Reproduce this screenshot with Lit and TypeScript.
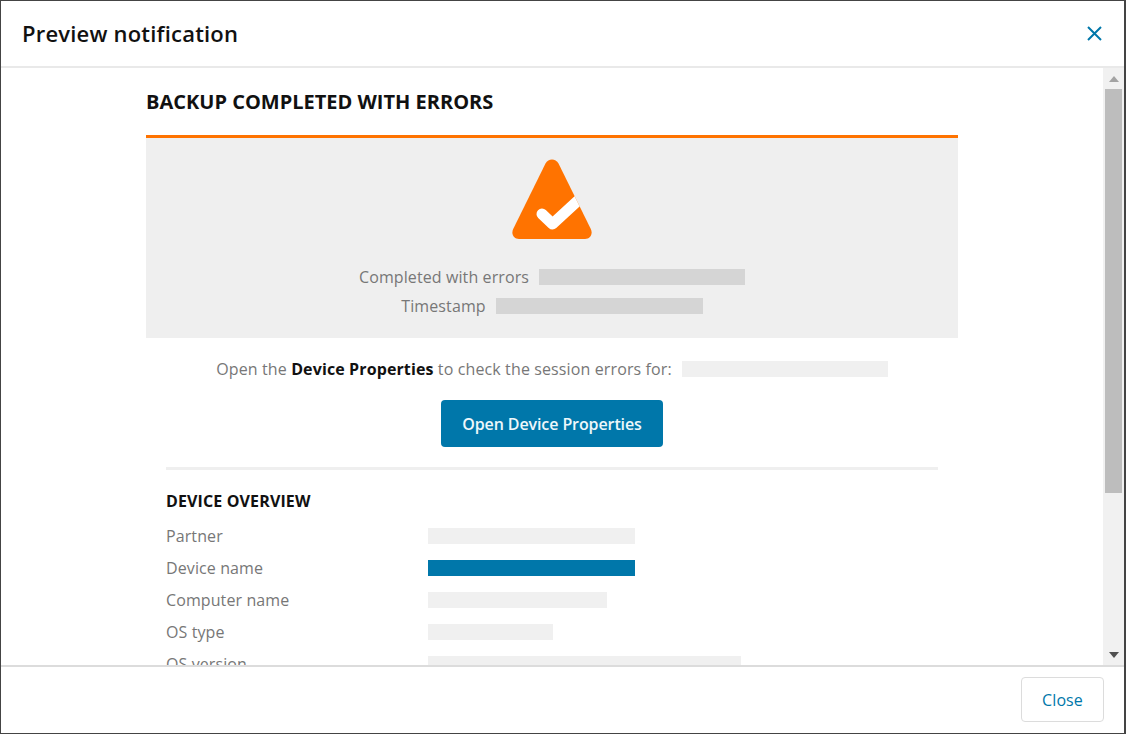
import { LitElement, html, css } from "lit";
import { customElement } from "lit/decorators.js";

@customElement("app-root")
export class AppRoot extends LitElement {
  static styles = css`
    :host { display: block; width: 1126px; height: 734px; font-family: "Open Sans", sans-serif; }
    .modal { box-sizing: border-box; width: 1126px; height: 734px; border: 1px solid #444; border-right-width: 2px; background: #fff; display: flex; flex-direction: column; overflow: hidden; }
    .head { box-sizing: border-box; height: 67px; flex: none; display: flex; align-items: center; justify-content: space-between; padding: 0 22px 0 21px; border-bottom: 2px solid #e9e9e9; }
    .head h1 { margin: 0 0 2px; font-size: 22px; font-weight: 600; letter-spacing: 0.2px; line-height: 30px; color: #111; }
    .x { display: block; }
    .middle { flex: 1; min-height: 0; display: flex; }
    .scroll { flex: 1; min-width: 0; overflow: hidden; display: flex; justify-content: center; }
    .doc { width: 812px; flex: none; padding-top: 20px; }
    .doc h2 { margin: 0 0 19px; font-size: 20px; font-weight: 700; line-height: 28px; color: #111; }
    .panel { box-sizing: border-box; height: 203px; background: #efefef; border-top: 3px solid #ff7300; display: flex; flex-direction: column; align-items: center; padding-top: 21px; }
    .panel svg { display: block; margin-bottom: 23px; }
    .stat { display: flex; align-items: center; gap: 10px; height: 29px; font-size: 16px; letter-spacing: 0.1px; color: #777; }
    .bar { height: 16px; display: block; flex: none; }
    .dark { background: #d5d5d5; }
    .light { background: #f0f0f0; }
    .blue { background: #0077aa; }
    .intro { display: flex; justify-content: center; align-items: center; gap: 10px; height: 22px; margin-top: 20px; font-size: 16px; letter-spacing: 0.12px; color: #777; white-space: nowrap; }
    .intro b { color: #111; font-weight: 700; }
    .cta { display: flex; justify-content: center; margin-top: 20px; }
    .btn { box-sizing: border-box; width: 222px; height: 47px; border-radius: 4px; background: #0077aa; color: #eef7fb; font-size: 16px; font-weight: 600; letter-spacing: -0.1px; display: flex; align-items: center; justify-content: center; }
    .overview { margin: 20px 20px 0; border-top: 3px solid #efefef; padding-top: 20px; }
    .overview h3 { margin: 0 0 8px; font-size: 16px; font-weight: 700; letter-spacing: 0.13px; line-height: 22px; color: #111; }
    .row { display: grid; grid-template-columns: 262px 1fr; align-items: center; height: 32px; font-size: 16px; letter-spacing: 0.1px; color: #777; }
    .rail { width: 21px; flex: none; background: #f1f1f1; display: flex; flex-direction: column; align-items: center; }
    .arrow { height: 21px; flex: none; display: flex; align-items: center; justify-content: center; }
    .thumb { width: 17px; height: 404px; flex: none; background: #bdbdbd; }
    .spacer { flex: 1; }
    .foot { box-sizing: border-box; height: 68px; flex: none; border-top: 2px solid #dcdcdc; display: flex; align-items: flex-start; justify-content: flex-end; padding: 10px 20px 0 0; }
    .close { box-sizing: border-box; width: 83px; height: 45px; border: 1px solid #dcdcdc; border-radius: 4px; background: #fff; color: #0077aa; font-size: 16px; letter-spacing: 0.1px; display: flex; align-items: center; justify-content: center; }
  `;

  render() {
    const rows: [string, number, string][] = [
      ["Partner", 207, "light"],
      ["Device name", 207, "blue"],
      ["Computer name", 179, "light"],
      ["OS type", 125, "light"],
      ["OS version", 313, "light"],
    ];
    return html`
      <div class="modal">
        <div class="head">
          <h1>Preview notification</h1>
          <svg class="x" width="15" height="15" viewBox="0 0 15 15" fill="none" stroke="#0077aa" stroke-width="2"><path d="M1 1 14 14M14 1 1 14"/></svg>
        </div>
        <div class="middle">
          <div class="scroll">
            <div class="doc">
              <h2>BACKUP COMPLETED WITH ERRORS</h2>
              <div class="panel">
                <svg width="80" height="80" viewBox="0 0 80 80">
                  <defs>
                    <clipPath id="tri"><path d="M33.5 4.5C36.4-1 43.6-1 46.5 4.5L78.8 70C81.2 75 78.2 80 73 80H7C1.8 80-1.2 75 1.2 70Z"/></clipPath>
                  </defs>
                  <path d="M33.5 4.5C36.4-1 43.6-1 46.5 4.5L78.8 70C81.2 75 78.2 80 73 80H7C1.8 80-1.2 75 1.2 70Z" fill="#ff7300"/>
                  <g clip-path="url(#tri)"><path d="M30 55 40.5 65 72 36" fill="none" stroke="#fff" stroke-width="11" stroke-linecap="round" stroke-linejoin="round"/></g>
                </svg>
                <div class="stat"><span>Completed with errors</span><span class="bar dark" style="width:206px"></span></div>
                <div class="stat"><span>Timestamp</span><span class="bar dark" style="width:207px"></span></div>
              </div>
              <div class="intro"><span>Open the <b>Device Properties</b> to check the session errors for:</span><span class="bar light" style="width:206px"></span></div>
              <div class="cta"><div class="btn">Open Device Properties</div></div>
              <div class="overview">
                <h3>DEVICE OVERVIEW</h3>
                ${rows.map(([label, w, cls]) => html`<div class="row"><span>${label}</span><span class="bar ${cls}" style="width:${w}px"></span></div>`)}
              </div>
            </div>
          </div>
          <div class="rail">
            <div class="arrow"><svg width="10" height="6" viewBox="0 0 10 6"><path d="M5 0 10 6H0Z" fill="#a3a3a3"/></svg></div>
            <div class="thumb"></div>
            <div class="spacer"></div>
            <div class="arrow"><svg width="10" height="6" viewBox="0 0 10 6"><path d="M0 0H10L5 6Z" fill="#505050"/></svg></div>
          </div>
        </div>
        <div class="foot"><div class="close">Close</div></div>
      </div>
    `;
  }
}
